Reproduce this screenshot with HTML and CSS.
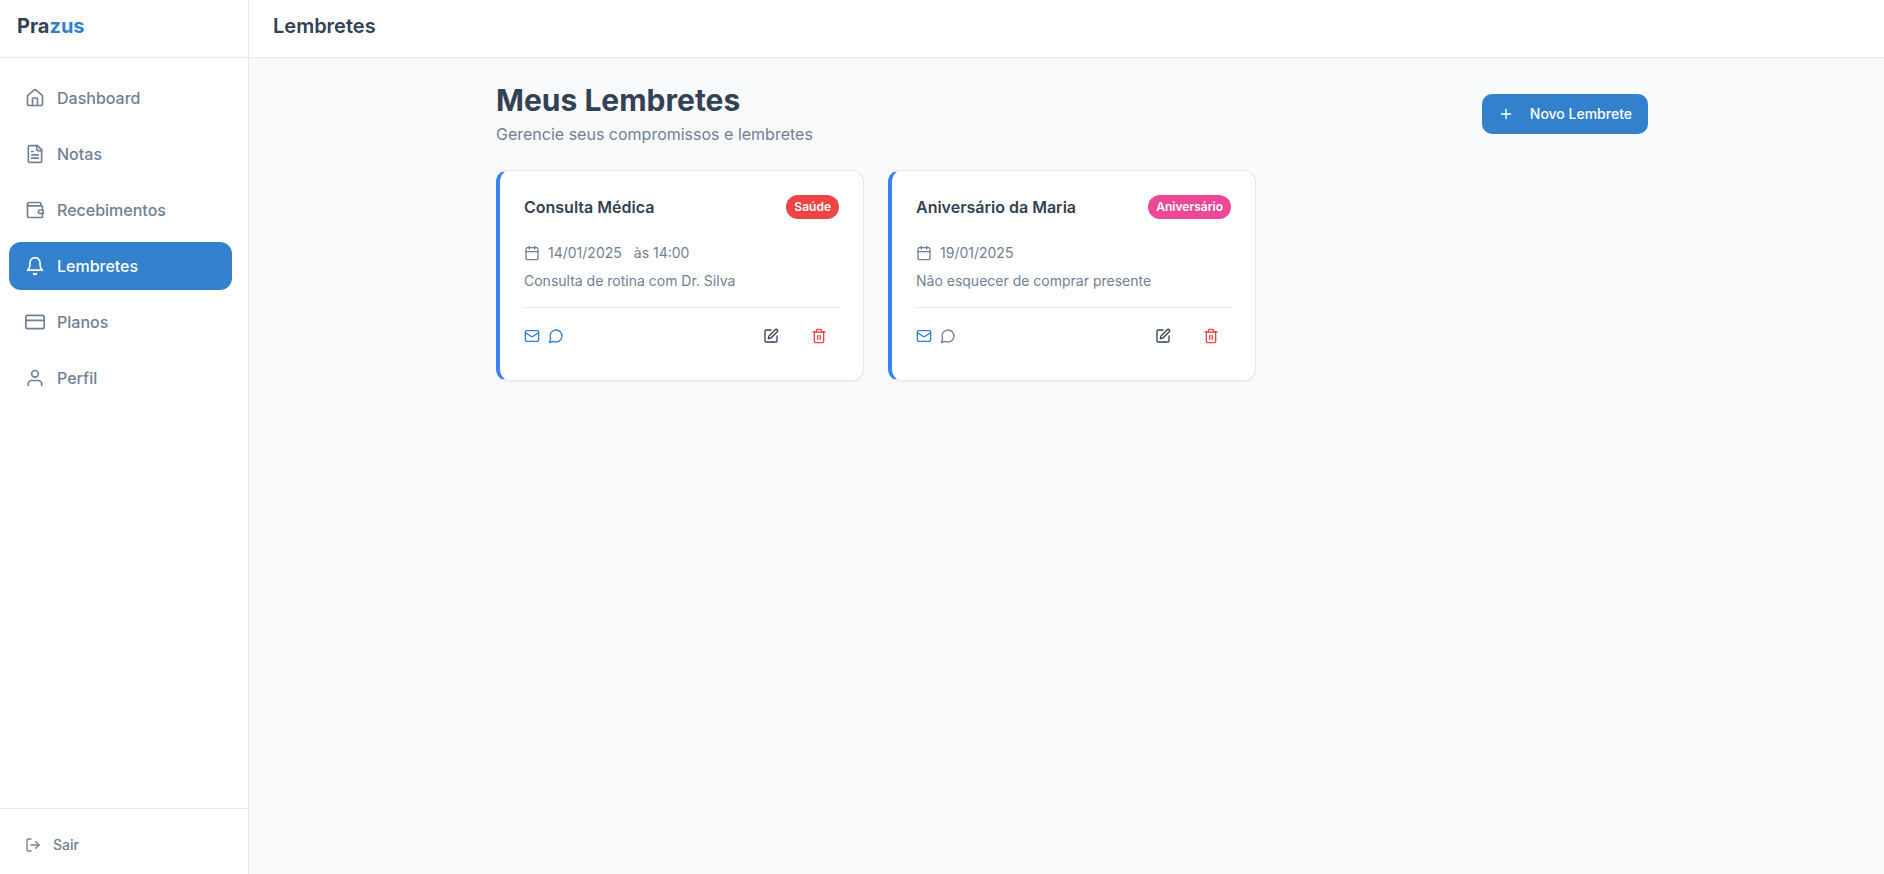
FILE: index.html
```html
<!DOCTYPE html>
<html lang="pt-BR">
<head>
<meta charset="utf-8">
<meta name="viewport" content="width=device-width, initial-scale=1">
<title>Prazus - Lembretes</title>
<link rel="stylesheet" href="styles.css">
</head>
<body>
<svg class="sprite" aria-hidden="true">
  <symbol id="home" viewBox="0 0 24 24"><path d="M15 21v-8a1 1 0 0 0-1-1h-4a1 1 0 0 0-1 1v8"/><path d="M3 10a2 2 0 0 1 .709-1.528l7-5.999a2 2 0 0 1 2.582 0l7 5.999A2 2 0 0 1 21 10v9a2 2 0 0 1-2 2H5a2 2 0 0 1-2-2z"/></symbol>
  <symbol id="file" viewBox="0 0 24 24"><path d="M15 2H6a2 2 0 0 0-2 2v16a2 2 0 0 0 2 2h12a2 2 0 0 0 2-2V7Z"/><path d="M14 2v4a2 2 0 0 0 2 2h4"/><path d="M10 9H8"/><path d="M16 13H8"/><path d="M16 17H8"/></symbol>
  <symbol id="wallet" viewBox="0 0 24 24"><path d="M19 7V4a1 1 0 0 0-1-1H5a2 2 0 0 0 0 4h15a1 1 0 0 1 1 1v4h-3a2 2 0 0 0 0 4h3a1 1 0 0 0 1-1v-2a1 1 0 0 0-1-1"/><path d="M3 5v14a2 2 0 0 0 2 2h15a1 1 0 0 0 1-1v-4"/></symbol>
  <symbol id="bell" viewBox="0 0 24 24"><path d="M6 8a6 6 0 0 1 12 0c0 7 3 9 3 9H3s3-2 3-9"/><path d="M10.3 21a1.94 1.94 0 0 0 3.4 0"/></symbol>
  <symbol id="card" viewBox="0 0 24 24"><rect width="22" height="16" x="1" y="4" rx="2"/><path d="M1 10h22"/></symbol>
  <symbol id="user" viewBox="0 0 24 24"><path d="M20 21v-2a4 4 0 0 0-4-4H8a4 4 0 0 0-4 4v2"/><circle cx="12" cy="7" r="4"/></symbol>
  <symbol id="logout" viewBox="0 0 24 24"><path d="M9 21H5a2 2 0 0 1-2-2V5a2 2 0 0 1 2-2h4"/><path d="m16 17 5-5-5-5"/><path d="M21 12H9"/></symbol>
  <symbol id="plus" viewBox="0 0 24 24"><path d="M5 12h14"/><path d="M12 5v14"/></symbol>
  <symbol id="calendar" viewBox="0 0 24 24"><path d="M8 2v4"/><path d="M16 2v4"/><rect width="18" height="18" x="3" y="4" rx="2"/><path d="M3 10h18"/></symbol>
  <symbol id="mail" viewBox="0 0 24 24"><rect width="20" height="16" x="2" y="4" rx="2"/><path d="m22 7-8.97 5.7a1.94 1.94 0 0 1-2.06 0L2 7"/></symbol>
  <symbol id="message" viewBox="0 0 24 24"><path d="M7.9 20A9 9 0 1 0 4 16.1L2 22Z"/></symbol>
  <symbol id="edit" viewBox="0 0 24 24"><path d="M12 3H5a2 2 0 0 0-2 2v14a2 2 0 0 0 2 2h14a2 2 0 0 0 2-2v-7"/><path d="M18.375 2.625a1 1 0 0 1 3 3l-9.013 9.014a2 2 0 0 1-.853.505l-2.873.84a.5.5 0 0 1-.62-.62l.84-2.873a2 2 0 0 1 .506-.852z"/></symbol>
  <symbol id="trash" viewBox="0 0 24 24"><path d="M3 6h18"/><path d="M19 6v14c0 1-1 2-2 2H7c-1 0-2-1-2-2V6"/><path d="M8 6V4c0-1 1-2 2-2h4c1 0 2 1 2 2v2"/><path d="M10 11v6"/><path d="M14 11v6"/></symbol>
</svg>
<div class="app">
  <aside class="sidebar">
    <a class="brand" href="#">Pra<span class="brand-accent">zus</span></a>
    <nav class="nav">
      <a class="nav-item" href="#"><svg class="icon icon-lg"><use href="#home"/></svg>Dashboard</a>
      <a class="nav-item" href="#"><svg class="icon icon-lg"><use href="#file"/></svg>Notas</a>
      <a class="nav-item" href="#"><svg class="icon icon-lg"><use href="#wallet"/></svg>Recebimentos</a>
      <a class="nav-item active" href="#" aria-current="page"><svg class="icon icon-lg"><use href="#bell"/></svg>Lembretes</a>
      <a class="nav-item" href="#"><svg class="icon icon-lg"><use href="#card"/></svg>Planos</a>
      <a class="nav-item" href="#"><svg class="icon icon-lg"><use href="#user"/></svg>Perfil</a>
    </nav>
    <div class="sidebar-footer">
      <button class="logout" type="button"><svg class="icon"><use href="#logout"/></svg>Sair</button>
    </div>
  </aside>
  <div class="page">
    <header class="topbar">Lembretes</header>
    <main class="main">
      <div class="container">
        <div class="heading">
          <div>
            <h1 class="title">Meus Lembretes</h1>
            <p class="subtitle">Gerencie seus compromissos e lembretes</p>
          </div>
          <button class="new" type="button"><svg class="icon"><use href="#plus"/></svg>Novo Lembrete</button>
        </div>
        <div class="cards">
          <article class="reminder">
            <div class="reminder-head">
              <h2 class="reminder-title">Consulta Médica</h2>
              <span class="badge health">Saúde</span>
            </div>
            <div class="date"><svg class="icon"><use href="#calendar"/></svg><span>14/01/2025</span><span class="time">às 14:00</span></div>
            <p class="description">Consulta de rotina com Dr. Silva</p>
            <div class="reminder-foot">
              <div class="channels"><svg class="icon on"><use href="#mail"/></svg><svg class="icon on"><use href="#message"/></svg></div>
              <div class="actions">
                <button class="action" type="button" aria-label="Editar"><svg class="icon"><use href="#edit"/></svg></button>
                <button class="action danger" type="button" aria-label="Excluir"><svg class="icon"><use href="#trash"/></svg></button>
              </div>
            </div>
          </article>
          <article class="reminder">
            <div class="reminder-head">
              <h2 class="reminder-title">Aniversário da Maria</h2>
              <span class="badge birthday">Aniversário</span>
            </div>
            <div class="date"><svg class="icon"><use href="#calendar"/></svg><span>19/01/2025</span></div>
            <p class="description">Não esquecer de comprar presente</p>
            <div class="reminder-foot">
              <div class="channels"><svg class="icon on"><use href="#mail"/></svg><svg class="icon"><use href="#message"/></svg></div>
              <div class="actions">
                <button class="action" type="button" aria-label="Editar"><svg class="icon"><use href="#edit"/></svg></button>
                <button class="action danger" type="button" aria-label="Excluir"><svg class="icon"><use href="#trash"/></svg></button>
              </div>
            </div>
          </article>
        </div>
      </div>
    </main>
  </div>
</div>
</body>
</html>
```
FILE: styles.css
```css
:root {
  --primary: #3380cc;
  --ink: #334155;
  --muted: #718096;
  --line: #e2e8f0;
}
* { box-sizing: border-box; }
body {
  margin: 0;
  background: #f9fafc;
  color: var(--ink);
  font: 400 16px/24px Inter, "Liberation Sans", sans-serif;
}
h1, h2, p { margin: 0; }
a { color: inherit; text-decoration: none; }
button {
  border: 0;
  background: none;
  color: inherit;
  font: inherit;
  cursor: pointer;
}
.sprite { display: none; }
.icon {
  width: 16px;
  height: 16px;
  flex: none;
  fill: none;
  stroke: currentColor;
  stroke-width: 2;
  stroke-linecap: round;
  stroke-linejoin: round;
}
.icon-lg { width: 20px; height: 20px; }

.app { display: flex; min-height: 100vh; }
.sidebar {
  display: flex;
  flex-direction: column;
  flex: none;
  width: 249px;
  background: #fff;
  border-right: 1px solid var(--line);
}
.brand, .topbar {
  height: 58px;
  padding-top: 12px;
  border-bottom: 1px solid var(--line);
  background: #fff;
  font-size: 20px;
  line-height: 28px;
}
.brand { padding-left: 17px; font-weight: 700; }
.brand-accent { color: var(--primary); }
.topbar { padding-left: 24px; font-weight: 600; }
.nav {
  display: flex;
  flex-direction: column;
  flex: 1;
  gap: 8px;
  padding: 16px 16px 16px 9px;
}
.nav-item {
  display: flex;
  align-items: center;
  gap: 12px;
  height: 48px;
  padding: 0 16px;
  border-radius: 12px;
  color: var(--muted);
  font-weight: 500;
}
.nav-item.active { background: var(--primary); color: #fff; }
.sidebar-footer {
  padding: 16px 16px 9px 9px;
  border-top: 1px solid var(--line);
}
.logout {
  display: flex;
  align-items: center;
  gap: 12px;
  width: 100%;
  height: 40px;
  padding: 0 16px;
  color: var(--muted);
  font-size: 14px;
  font-weight: 500;
}

.page { flex: 1; min-width: 0; }
.main { padding: 24px 24px 24px 35px; }
.container { max-width: 1152px; margin: 0 auto; }
.heading {
  display: flex;
  align-items: center;
  justify-content: space-between;
  margin-bottom: 24px;
}
.title { font-size: 30px; line-height: 36px; font-weight: 700; }
.subtitle { margin-top: 4px; color: var(--muted); }
.new {
  display: flex;
  align-items: center;
  gap: 16px;
  height: 40px;
  padding: 0 16px;
  border-radius: 10px;
  background: var(--primary);
  color: #fff;
  font-size: 14px;
  font-weight: 500;
}
.cards {
  display: grid;
  grid-template-columns: repeat(3, minmax(0, 1fr));
  gap: 24px;
}
.reminder {
  padding: 24px;
  border: 1px solid var(--line);
  border-left: 4px solid #3b82f6;
  border-radius: 12px;
  background: #fff;
  box-shadow: 0 1px 2px rgb(0 0 0 / 5%);
  color: var(--muted);
  font-size: 14px;
  line-height: 20px;
}
.reminder-head {
  display: flex;
  align-items: center;
  justify-content: space-between;
  margin-bottom: 24px;
}
.reminder-title {
  color: var(--ink);
  font-size: 16px;
  line-height: 24px;
  font-weight: 600;
}
.badge {
  padding: 4px 8px;
  border-radius: 12px;
  color: #fff;
  font-size: 12px;
  line-height: 16px;
  font-weight: 600;
}
.health { background: #ef4444; }
.birthday { background: #ec4899; }
.date { display: flex; align-items: center; gap: 8px; }
.time { margin-left: 4px; }
.description { margin-top: 8px; }
.reminder-foot {
  display: flex;
  align-items: center;
  justify-content: space-between;
  margin-top: 16px;
  padding-top: 8px;
  border-top: 1px solid var(--line);
}
.channels, .actions { display: flex; gap: 8px; }
.on { color: var(--primary); }
.action {
  display: grid;
  place-items: center;
  width: 40px;
  height: 40px;
  padding: 0;
  color: var(--ink);
}
.danger { color: #ef4444; }
```
